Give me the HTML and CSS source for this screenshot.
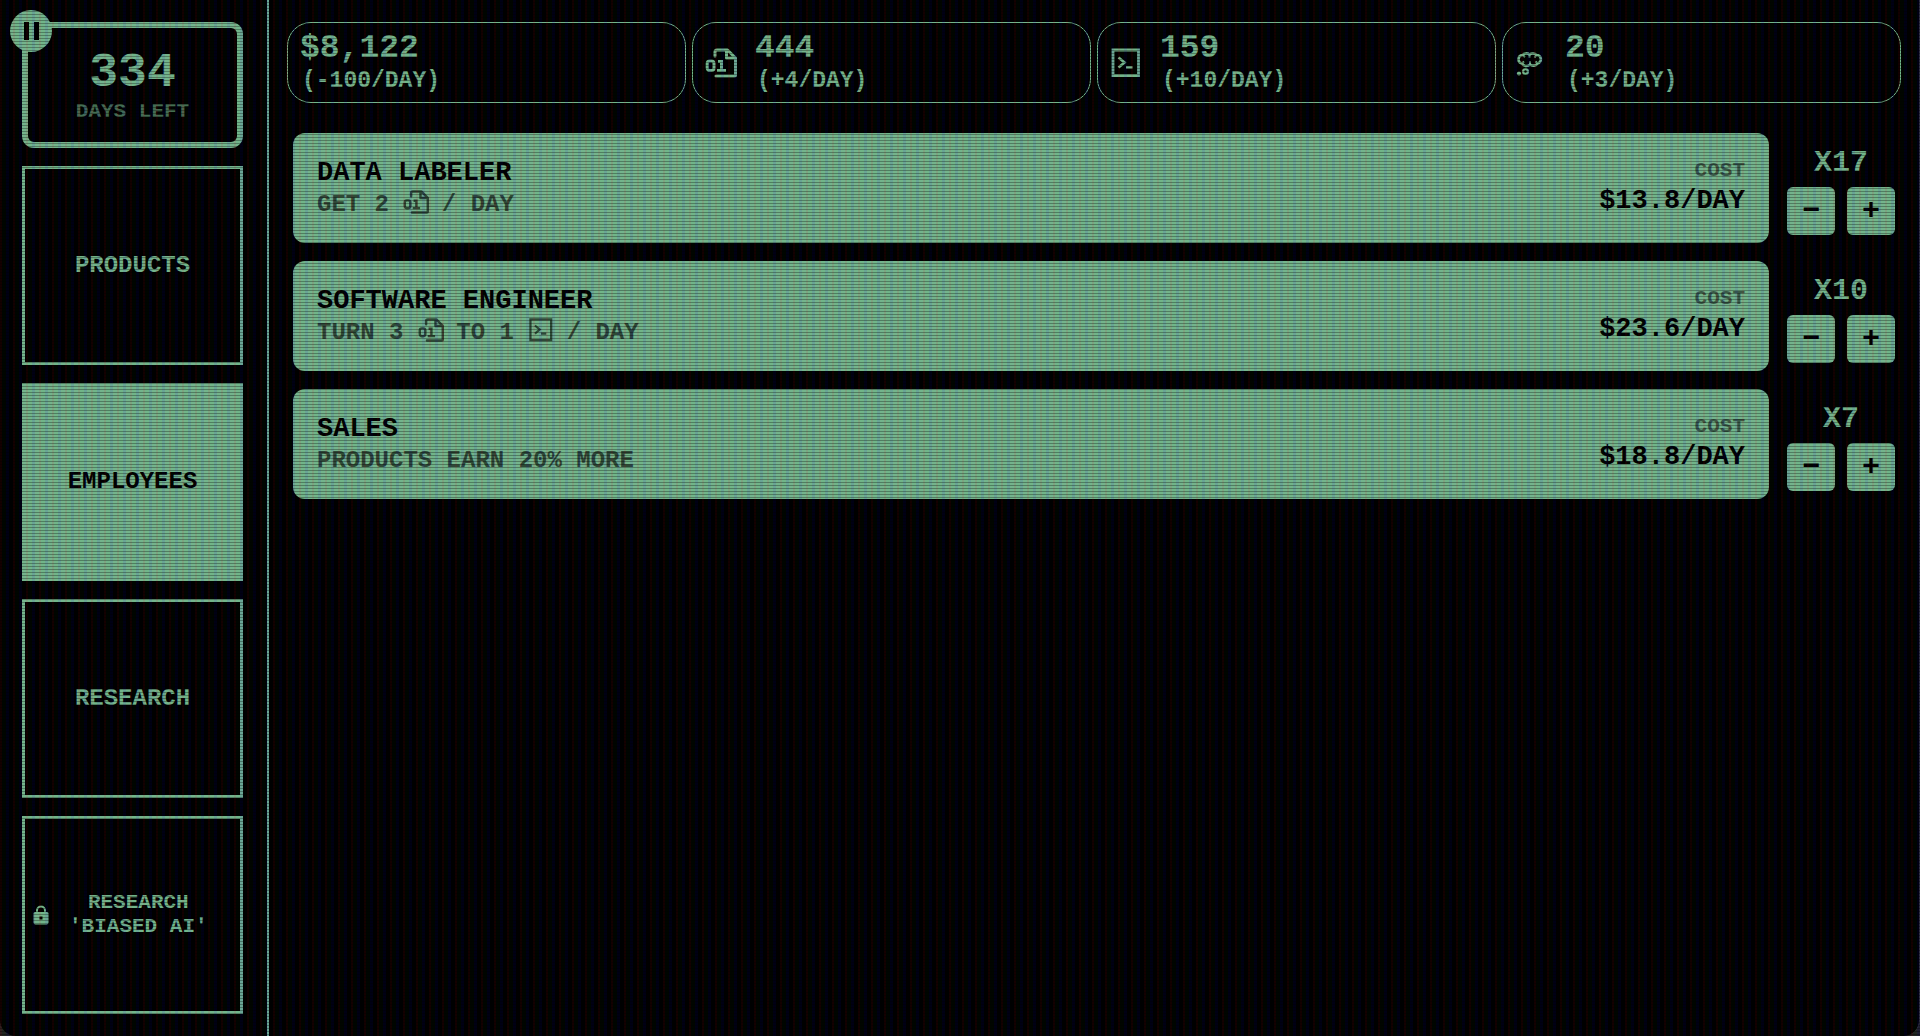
FILE: index.html
```html
<!DOCTYPE html>
<html lang="en">
<head>
  <meta charset="UTF-8" />
  <meta name="viewport" content="width=device-width, initial-scale=1" />
  <title>Employees</title>
  <link rel="stylesheet" href="styles.css">
</head>
<body>
<svg class="defs" aria-hidden="true">
  <symbol id="icon-data" viewBox="0 0 32 32">
    <path d="M10 9V5a2 2 0 0 1 2-2h10.500l8 8v17a1 1 0 0 1-1 1H11M21.500 3.500v7.500h8.500" fill="none" stroke="currentColor" stroke-width="3" stroke-linecap="round" stroke-linejoin="round" />
    <rect x="2.200" y="14" width="6.800" height="9.600" rx="2.600" fill="none" stroke="currentColor" stroke-width="3" />
    <path d="M13 14.500h3.500v9M12 23.500h9" fill="none" stroke="currentColor" stroke-width="3" />
  </symbol>
  <symbol id="icon-code" viewBox="0 0 32 32">
    <path d="M3 3h25.500v25.500h-25.500z" fill="none" stroke="currentColor" stroke-width="2.800" />
    <path d="M8.500 10.500l6 5-6 5M16 20.500h6.500" fill="none" stroke="currentColor" stroke-width="2.600" />
  </symbol>
  <symbol id="icon-thought" viewBox="0 0 32 32">
    <path d="M7 16.500A4.300 4.300 0 0 1 7.500 8A4.500 3.500 0 0 1 14.500 7.500A5 4 0 0 1 21.500 8A4.300 4.300 0 0 1 22.500 16.500A4.500 3.500 0 0 1 15 17.500A4.500 3.500 0 0 1 7 16.500Z" fill="none" stroke="currentColor" stroke-width="2.600" stroke-linejoin="round" />
    <path d="M7.500 8l2.500 2M14.500 7.500v3M21.500 8l-2 2.500M15 17.500v-3M7 16.500l2-2M22.500 16.500l-2-2" fill="none" stroke="currentColor" stroke-width="2" />
    <circle cx="10.500" cy="24.500" r="2.400" fill="none" stroke="currentColor" stroke-width="2.200" />
    <circle cx="4" cy="26.500" r="2.100" fill="currentColor" />
  </symbol>
</svg>

<div class="game">
  <aside class="sidebar">
    <div class="days">
      <button class="pause" aria-label="Pause"><span></span><span></span></button>
      <strong>334</strong>
      <span class="days-label">DAYS LEFT</span>
    </div>
    <nav class="tabs">
      <button class="tab">PRODUCTS</button>
      <button class="tab active">EMPLOYEES</button>
      <button class="tab">RESEARCH</button>
      <button class="tab locked">
        <svg class="lock" viewBox="0 0 16 20" aria-hidden="true">
          <path d="M4 8V5.500a4 4 0 0 1 8 0V8" fill="none" stroke="currentColor" stroke-width="2" />
          <path fill-rule="evenodd" d="M2 7h12q1.500 0 1.500 1.500v9q0 2-2 2h-11q-2 0-2-2v-9q0-1.500 1.500-1.500zM6.500 11.500v3h3v-3z" fill="currentColor" />
        </svg>
        <span>RESEARCH<br>'BIASED AI'</span>
      </button>
    </nav>
  </aside>

  <main class="content">
    <section class="stats">
      <div class="stat">
        <div><div class="amount">$8,122</div><div class="rate">(-100/DAY)</div></div>
      </div>
      <div class="stat">
        <svg class="stat-icon"><use href="#icon-data" /></svg>
        <div><div class="amount">444</div><div class="rate">(+4/DAY)</div></div>
      </div>
      <div class="stat">
        <svg class="stat-icon"><use href="#icon-code" /></svg>
        <div><div class="amount">159</div><div class="rate">(+10/DAY)</div></div>
      </div>
      <div class="stat">
        <svg class="stat-icon"><use href="#icon-thought" /></svg>
        <div><div class="amount">20</div><div class="rate">(+3/DAY)</div></div>
      </div>
    </section>

    <section class="employees">
      <div class="employee">
        <div class="card">
          <div>
            <h2>DATA LABELER</h2>
            <p>GET 2 <svg class="inline-icon"><use href="#icon-data" /></svg> / DAY</p>
          </div>
          <div class="cost"><span>COST</span><strong>$13.8/DAY</strong></div>
        </div>
        <div class="hire">
          <div class="count">X17</div>
          <button aria-label="Fire data labeler">−</button>
          <button aria-label="Hire data labeler">+</button>
        </div>
      </div>
      <div class="employee">
        <div class="card">
          <div>
            <h2>SOFTWARE ENGINEER</h2>
            <p>TURN 3 <svg class="inline-icon"><use href="#icon-data" /></svg> TO 1 <svg class="inline-icon"><use href="#icon-code" /></svg> / DAY</p>
          </div>
          <div class="cost"><span>COST</span><strong>$23.6/DAY</strong></div>
        </div>
        <div class="hire">
          <div class="count">X10</div>
          <button aria-label="Fire software engineer">−</button>
          <button aria-label="Hire software engineer">+</button>
        </div>
      </div>
      <div class="employee">
        <div class="card">
          <div>
            <h2>SALES</h2>
            <p>PRODUCTS EARN 20% MORE</p>
          </div>
          <div class="cost"><span>COST</span><strong>$18.8/DAY</strong></div>
        </div>
        <div class="hire">
          <div class="count">X7</div>
          <button aria-label="Fire sales">−</button>
          <button aria-label="Hire sales">+</button>
        </div>
      </div>
    </section>
  </main>
</div>
</body>
</html>
```

FILE: styles.css
```css
* {
  box-sizing: border-box;
}

body {
  margin: 0;
  background: #222;
  color: #74b48c;
  font-family: "Liberation Mono", "Courier New", monospace;
  font-weight: bold;
}

button {
  font: inherit;
  color: inherit;
  padding: 0;
  border: none;
  cursor: pointer;
}

.defs {
  position: absolute;
  width: 0;
  height: 0;
}

.game {
  display: flex;
  min-height: 100vh;
  background: #000;
  border-right: 1px solid #333;
  border-radius: 0 0 16px 16px;
  overflow: hidden;
}

/* CRT scanlines over everything */
.game::after {
  content: "";
  position: fixed;
  inset: 0;
  pointer-events: none;
  background:
    repeating-linear-gradient(to bottom, transparent 0 2px, rgba(0, 0, 0, 0.3) 2px 3px),
    repeating-linear-gradient(to right, rgba(255, 0, 0, 0.08) 0 2px, rgba(0, 255, 0, 0.02) 2px 6px, rgba(0, 0, 255, 0.08) 6px 9px, transparent 9px 13px);
}

.sidebar {
  display: flex;
  flex-direction: column;
  gap: 18px;
  width: 269px;
  padding: 22px 24px 22px 22px;
  border-right: 2px solid #74b48c;
}

.days {
  position: relative;
  display: flex;
  flex-direction: column;
  align-items: center;
  height: 126px;
  padding-top: 20px;
  border: 6px solid #74b48c;
  border-radius: 12px;
}

.days strong {
  font-size: 48px;
  line-height: 50px;
}

.days-label {
  font-size: 21px;
  line-height: 28px;
  opacity: 0.6;
}

.pause {
  position: absolute;
  top: -18px;
  left: -18px;
  display: flex;
  justify-content: center;
  align-items: center;
  gap: 5px;
  width: 42px;
  height: 42px;
  border-radius: 50%;
  background: #74b48c;
}

.pause span {
  width: 5px;
  height: 18px;
  background: #000;
}

.tabs {
  display: flex;
  flex: 1;
  flex-direction: column;
  gap: 18px;
}

.tab {
  flex: 1;
  border: 3px solid #74b48c;
  background: none;
  font-size: 24px;
}

.tab.active {
  background: #74b48c;
  color: #000;
}

.tab.locked {
  display: flex;
  align-items: center;
  gap: 20px;
  padding-left: 8px;
  font-size: 21px;
  line-height: 24px;
}

.lock {
  width: 16px;
  height: 20px;
}

.content {
  flex: 1;
  padding: 22px 18px;
}

.stats {
  display: grid;
  grid-template-columns: repeat(4, 1fr);
  gap: 6px;
}

.stat {
  display: flex;
  align-items: center;
  gap: 18px;
  height: 81px;
  padding: 0 12px;
  border: 1px solid #74b48c;
  border-radius: 24px;
}

.stat-icon {
  width: 32px;
  height: 32px;
}

.amount {
  font-size: 33px;
  line-height: 36px;
}

.rate {
  padding-left: 2px;
  font-size: 23px;
  line-height: 28px;
}

.employees {
  display: flex;
  flex-direction: column;
  gap: 18px;
  margin-top: 30px;
  padding: 0 6px;
}

.employee {
  display: flex;
  gap: 18px;
}

.card {
  display: flex;
  flex: 1;
  justify-content: space-between;
  height: 110px;
  padding: 24px;
  border-radius: 12px;
  background: #74b48c;
  color: #000;
}

.card h2 {
  margin: 0;
  font-size: 27px;
  line-height: 32px;
}

.card p {
  margin: 0;
  font-size: 24px;
  line-height: 32px;
  opacity: 0.6;
}

.inline-icon {
  width: 26px;
  height: 26px;
  margin-right: -2px;
  vertical-align: -4px;
}

.cost {
  display: flex;
  flex-direction: column;
  text-align: right;
}

.cost span {
  font-size: 21px;
  line-height: 28px;
  opacity: 0.5;
}

.cost strong {
  font-size: 27px;
  line-height: 32px;
}

.hire {
  display: grid;
  grid-template-columns: 48px 48px;
  gap: 8px 12px;
  align-content: end;
  padding-bottom: 8px;
}

.count {
  grid-column: 1 / 3;
  font-size: 30px;
  line-height: 32px;
  text-align: center;
}

.hire button {
  height: 48px;
  border-radius: 6px;
  background: #74b48c;
  color: #000;
  font-size: 30px;
}
```
